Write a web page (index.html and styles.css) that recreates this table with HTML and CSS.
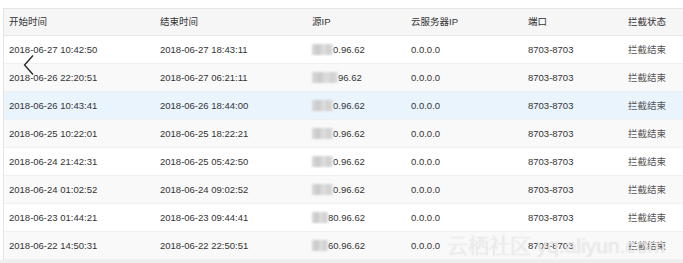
FILE: index.html
```html
<!DOCTYPE html>
<html lang="zh-CN">
<head>
<meta charset="utf-8">
<title>拦截记录</title>
<link rel="stylesheet" href="styles.css">
</head>
<body>
<div class="page">
  <table class="grid">
    <colgroup>
      <col class="c1"><col class="c2"><col class="c3"><col class="c4"><col class="c5"><col class="c6">
    </colgroup>
    <thead>
      <tr><th>开始时间</th><th>结束时间</th><th>源IP</th><th>云服务器IP</th><th>端口</th><th>拦截状态</th></tr>
    </thead>
    <tbody>
      <tr><td>2018-06-27 10:42:50</td><td>2018-06-27 18:43:11</td><td><span class="mask"></span>0.96.62</td><td>0.0.0.0</td><td>8703-8703</td><td class="st">拦截结束</td></tr>
      <tr><td>2018-06-26 22:20:51</td><td>2018-06-27 06:21:11</td><td><span class="mask wide"></span>96.62</td><td>0.0.0.0</td><td>8703-8703</td><td class="st">拦截结束</td></tr>
      <tr class="hover"><td>2018-06-26 10:43:41</td><td>2018-06-26 18:44:00</td><td><span class="mask"></span>0.96.62</td><td>0.0.0.0</td><td>8703-8703</td><td class="st">拦截结束</td></tr>
      <tr><td>2018-06-25 10:22:01</td><td>2018-06-25 18:22:21</td><td><span class="mask"></span>0.96.62</td><td>0.0.0.0</td><td>8703-8703</td><td class="st">拦截结束</td></tr>
      <tr><td>2018-06-24 21:42:31</td><td>2018-06-25 05:42:50</td><td><span class="mask"></span>0.96.62</td><td>0.0.0.0</td><td>8703-8703</td><td class="st">拦截结束</td></tr>
      <tr><td>2018-06-24 01:02:52</td><td>2018-06-24 09:02:52</td><td><span class="mask"></span>0.96.62</td><td>0.0.0.0</td><td>8703-8703</td><td class="st">拦截结束</td></tr>
      <tr><td>2018-06-23 01:44:21</td><td>2018-06-23 09:44:41</td><td><span class="mask narrow"></span>80.96.62</td><td>0.0.0.0</td><td>8703-8703</td><td class="st">拦截结束</td></tr>
      <tr><td>2018-06-22 14:50:31</td><td>2018-06-22 22:50:51</td><td><span class="mask narrow"></span>60.96.62</td><td>0.0.0.0</td><td>8703-8703</td><td class="st">拦截结束</td></tr>
    </tbody>
  </table>
  <svg class="prev" width="14" height="22" viewBox="0 0 14 22" aria-hidden="true">
    <polyline points="11,1.5 2.5,11 11,20.5" fill="none" stroke="#222" stroke-width="1.3" stroke-linejoin="miter"/>
  </svg>
  <div class="watermark">云栖社区 yq.aliyun.com</div>
</div>
</body>
</html>
```

FILE: styles.css
```css
html, body {
  margin: 0;
  padding: 0;
}
body {
  background: #eeeeee;
  width: 683px;
  height: 263px;
  overflow: hidden;
  font-family: "Liberation Sans", "Noto Sans CJK SC", sans-serif;
  font-size: 9.5px;
  color: #333;
}
.page {
  position: relative;
  background: #fff;
  padding: 8px 0 0 3px;
}
.grid {
  border-collapse: separate;
  border-spacing: 0;
  table-layout: fixed;
  width: 680px;
  border-left: 1px solid #e4e4e4;
}
.c1 { width: 151px; }
.c2 { width: 152px; }
.c3 { width: 99px; }
.c4 { width: 117px; }
.c5 { width: 100px; }
.c6 { width: 61px; }
.grid th {
  text-align: left;
  font-weight: normal;
  color: #333;
  background: #f6f6f6;
  border-top: 1px solid #e6e6e6;
  border-bottom: 1px solid #e6e6e6;
  line-height: 26px;
  padding: 0 5px;
  white-space: nowrap;
}
.grid td {
  line-height: 27px;
  padding: 0 5px;
  border-bottom: 1px solid #f0f0f0;
  white-space: nowrap;
  background: #fff;
}
.grid tbody tr:nth-child(even) td {
  background: #f9f9f9;
}
.grid tbody tr.hover td {
  background: #eaf4fd;
}
.grid td.st {
  color: #555;
}
.mask {
  display: inline-block;
  width: 21px;
  height: 11px;
  vertical-align: -2px;
  background: linear-gradient(90deg, #d9d9d9 0, #c9c9c9 30%, #dedede 55%, #cfcfcf 80%, #e2e2e2 100%);
  filter: blur(0.8px);
}
.mask.wide { width: 26px; }
.mask.narrow { width: 16px; }
.prev {
  position: absolute;
  left: 22px;
  top: 54px;
}
.watermark {
  position: absolute;
  left: 447px;
  top: 229px;
  font-family: "Liberation Sans", "Noto Sans CJK SC", sans-serif;
  font-size: 21px;
  font-weight: 300;
  color: rgba(245, 245, 245, 0.8);
  text-shadow: 0 0 1px rgba(170, 170, 170, 0.55);
  white-space: nowrap;
  pointer-events: none;
}
```
